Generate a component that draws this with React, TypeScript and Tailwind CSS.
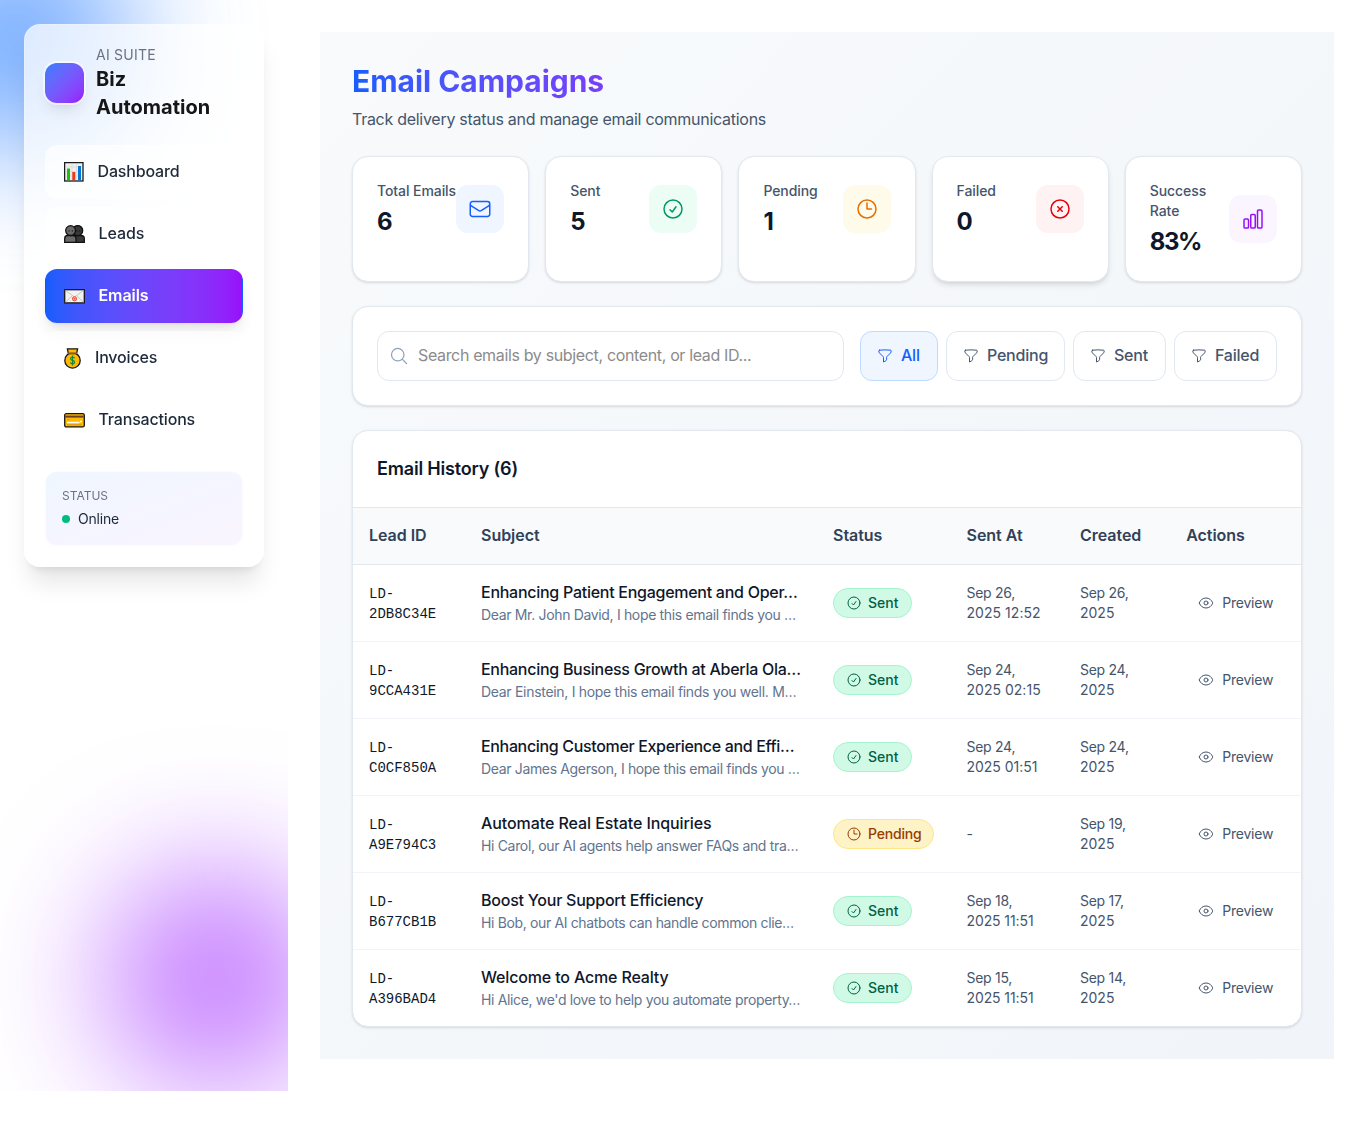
import type { ComponentType, ReactNode } from "react";
import {
  HiOutlineChartBar,
  HiOutlineCheckCircle,
  HiOutlineClock,
  HiOutlineEnvelope,
  HiOutlineEye,
  HiOutlineMagnifyingGlass,
  HiOutlineXCircle,
} from "react-icons/hi2";

type Icon = ComponentType<{ className?: string }>;

function ChartGlyph() {
  return (
    <svg width="20" height="20" viewBox="0 0 20 20">
      <rect x="0.6" y="0.6" width="18.4" height="18.4" fill="#f0f0f0" stroke="#1b1b1b" strokeWidth="1.3" />
      <path d="M1.5 5h16M1.5 9.5h16M1.5 14h16M8 1.5v16M12.5 1.5v16" stroke="#d9d9d9" strokeWidth="0.7" />
      <rect x="3" y="6.5" width="3" height="11.8" fill="#16c60c" />
      <rect x="8.3" y="10" width="3" height="8.3" fill="#f03a17" />
      <rect x="14" y="4" width="3" height="14.3" fill="#0078d7" />
    </svg>
  );
}

function PeopleGlyph() {
  return (
    <svg width="21" height="18" viewBox="0 0 21 18">
      <path d="M9 17.3v-3.8q0-3 3-3h5q3.3 0 3.3 3v3.8z" fill="#383838" stroke="#111" strokeWidth="1.3" />
      <circle cx="13.7" cy="5.6" r="5" fill="#383838" stroke="#111" strokeWidth="1.3" />
      <path d="M0.7 17.3v-3.8q0-3 3-3h5q3.3 0 3.3 3v3.8z" fill="#6a6a6a" stroke="#111" strokeWidth="1.3" />
      <circle cx="6.6" cy="5.6" r="4.9" fill="#6a6a6a" stroke="#111" strokeWidth="1.3" />
      <path d="M5 5.2v1.4M8.3 5.2v1.4M12.8 5.2v1.4M15.8 5.2v1.4" stroke="#111" strokeWidth="0.9" />
    </svg>
  );
}

function MailGlyph() {
  return (
    <svg width="21" height="15" viewBox="0 0 21 15">
      <rect x="0.7" y="0.7" width="19.6" height="13.2" fill="#f2f2f2" stroke="#171717" strokeWidth="1.3" />
      <path d="M1.5 1.5 10.5 8l9-6.5M1.5 13.2 8 7M19.5 13.2 13 7" fill="none" stroke="#bdbdbd" strokeWidth="0.8" />
      <circle cx="10.5" cy="9.8" r="2.1" fill="#f7b5a8" stroke="#f03a17" strokeWidth="0.9" />
      <circle cx="10.5" cy="9.8" r="0.8" fill="#f03a17" />
    </svg>
  );
}

function MoneyGlyph() {
  return (
    <svg width="17" height="21" viewBox="0 0 17 21">
      <circle cx="8.5" cy="12.4" r="7.7" fill="#ffb900" stroke="#171717" strokeWidth="1.3" />
      <path d="M3.4 0.8h10.2l-1 4.8h-8.2z" fill="#ffb900" stroke="#171717" strokeWidth="1.3" />
      <path d="M4 5.2h9" stroke="#8e562e" strokeWidth="1.6" />
      <path
        d="M10.6 10.2q-.6-1.1-2.1-1.1-1.9 0-1.9 1.6 0 1.3 1.9 1.7 2 .4 2 1.8 0 1.6-2 1.6-1.7 0-2.2-1.2M8.5 7.5v10"
        fill="none"
        stroke="#10893e"
        strokeWidth="1.2"
      />
    </svg>
  );
}

function CardGlyph() {
  return (
    <svg width="21" height="15" viewBox="0 0 21 15">
      <rect x="0.7" y="0.7" width="19.6" height="13.2" rx="1.5" fill="#ffb900" stroke="#171717" strokeWidth="1.3" />
      <rect x="1.3" y="2.6" width="18.4" height="2" fill="#6b3f22" />
      <path d="M3 6.8h2.5M3 11.8h14.5" stroke="#d88a00" strokeWidth="0.8" />
      <path d="M3 9.4h12.5M16 8.6h2" stroke="#fff" strokeWidth="1.5" />
    </svg>
  );
}

function FunnelIcon() {
  return (
    <svg
      className="size-4 shrink-0"
      viewBox="0 0 16 16"
      fill="none"
      stroke="currentColor"
      strokeWidth="1"
      strokeLinecap="round"
      strokeLinejoin="round"
    >
      <path d="M2.4 2.2Q8 1.500 13.600 2.200Q14.200 2.300 14.200 3Q14.200 4.300 13.500 5L10 8.500Q9.600 8.900 9.600 9.500V11.400Q9.600 12.300 8.800 12.700L6.500 14V9.500Q6.500 8.900 6 8.500L2.500 5Q1.800 4.300 1.800 3Q1.800 2.300 2.400 2.200Z" />
    </svg>
  );
}

const navItems = [
  { label: "Dashboard", glyph: <ChartGlyph />, box: "w-[21.5px]", text: "font-[450] tracking-[-0.17px]" },
  { label: "Leads", glyph: <PeopleGlyph />, box: "w-[22.5px]", text: "font-[450] tracking-[-0.1px]" },
  { label: "Emails", glyph: <MailGlyph />, box: "w-[22.5px]", text: "font-semibold tracking-[-0.08px]", active: true },
  { label: "Invoices", glyph: <MoneyGlyph />, box: "w-[19px]", text: "font-[450] tracking-[-0.18px]" },
  { label: "Transactions", glyph: <CardGlyph />, box: "w-[22.5px]", text: "font-[450] tracking-[-0.18px]" },
];

function Sidebar() {
  return (
    <aside className="relative h-[1091px] w-72 shrink-0 overflow-hidden p-6">
      <div className="absolute -left-24 -top-[72px] size-56 rounded-full bg-[#2b7fff]/68 blur-[64px]" />
      <div className="absolute -right-10 bottom-0 size-56 rounded-full bg-[#ad46ff]/69 blur-[64px]" />
      <div className="relative h-[543px] rounded-2xl border border-white/20 bg-white/72 p-5 shadow-xl backdrop-blur-xl">
        <div className="flex items-center gap-3">
          <div className="h-10 w-[39px] shrink-0 rounded-xl bg-linear-to-br from-[#2b7fff] to-[#9810fa] shadow-lg ring-2 ring-white/60" />
          <div>
            <p className="text-sm tracking-[0.25px] text-[#6a7282]">AI SUITE</p>
            <h1 className="text-xl leading-7 font-bold text-[#171717]">
              Biz
              <br />
              Automation
            </h1>
          </div>
        </div>
        <nav className="mt-6 flex flex-col gap-2">
          {navItems.map((item) => (
            <a
              key={item.label}
              className={
                item.active
                  ? "flex h-[54px] items-center rounded-xl border border-transparent bg-linear-to-r from-[#155dfc] to-[#9810fa] pl-[18px] text-white shadow-lg"
                  : "flex h-[54px] items-center rounded-xl border border-white/20 bg-white/60 pl-[18px] text-[#1e2939]"
              }
            >
              <span className={item.box + " shrink-0"}>{item.glyph}</span>
              <span className={item.text + " ml-3 pb-0.5"}>{item.label}</span>
            </a>
          ))}
        </nav>
        <div className="mt-6 h-[75px] rounded-xl border border-white/60 bg-linear-to-br from-[#eff6ff] to-[#faf5ff] p-4">
          <p className="text-xs text-[#6a7282]">STATUS</p>
          <div className="mt-[5px] flex items-center gap-2">
            <span className="h-2 w-2 rounded-full bg-[#00bc7d]" />
            <span className="text-sm tracking-[-0.2px] text-[#1e2939]">Online</span>
          </div>
        </div>
      </div>
    </aside>
  );
}

const stats: { label: string; value: string; icon: Icon; tone: string; shadow: string; num: string }[] = [
  { label: "Total Emails", value: "6", icon: HiOutlineEnvelope, tone: "bg-[#eff6ff] text-[#155dfc]", shadow: "shadow-sm", num: "" },
  { label: "Sent", value: "5", icon: HiOutlineCheckCircle, tone: "bg-[#ecfdf5] text-[#009966]", shadow: "shadow-sm", num: "" },
  { label: "Pending", value: "1", icon: HiOutlineClock, tone: "bg-[#fffbeb] text-[#e17100]", shadow: "shadow-sm", num: "" },
  { label: "Failed", value: "0", icon: HiOutlineXCircle, tone: "bg-[#fef2f2] text-[#e7000b]", shadow: "shadow-md", num: "" },
  { label: "Success Rate", value: "83%", icon: HiOutlineChartBar, tone: "bg-[#faf5ff] text-[#9810fa]", shadow: "shadow-sm", num: "tracking-[-1.4px]" },
];

function StatCards() {
  return (
    <div className="grid grid-cols-5 gap-4">
      {stats.map(({ label, value, icon: StatIcon, tone, shadow, num }) => (
        <div key={label} className={"h-[126px] rounded-2xl border border-[#e2e8f0] bg-white p-6 " + shadow}>
          <div className="flex items-center justify-between">
            <div>
              <p className="text-sm font-[450] tracking-[-0.08px] text-[#45556c]">{label}</p>
              <p className={"mt-[5px] -mb-px text-2xl leading-8 font-bold text-[#0f172b] " + num}>{value}</p>
            </div>
            <div className={"flex size-12 shrink-0 items-center justify-center rounded-xl " + tone}>
              <StatIcon className="size-6" />
            </div>
          </div>
        </div>
      ))}
    </div>
  );
}

const filters = [
  { label: "All", style: "w-[78px] border-[#bedbff] bg-[#eff6ff] text-[#155dfc]" },
  { label: "Pending", style: "w-[119px] border-[#e2e8f0] bg-white text-[#45556c]" },
  { label: "Sent", style: "w-[93px] border-[#e2e8f0] bg-white text-[#45556c]" },
  { label: "Failed", style: "w-[103px] border-[#e2e8f0] bg-white text-[#45556c]" },
];

function FilterBar() {
  return (
    <div className="mt-6 flex gap-4 rounded-2xl border border-[#e2e8f0] bg-white p-6 shadow-sm">
      <div className="relative flex-1">
        <HiOutlineMagnifyingGlass className="absolute left-3 top-[15px] size-5 text-[#90a1b9]" />
        <input
          placeholder="Search emails by subject, content, or lead ID..."
          className="h-[50px] w-full rounded-xl border border-[#e2e8f0] pb-0.5 pl-10 tracking-[-0.35px] placeholder:text-[#8b8b8b]"
        />
      </div>
      <div className="flex gap-2">
        {filters.map((f) => (
          <button key={f.label} className={"flex h-[50px] items-center gap-2 rounded-xl border pl-4 font-medium tracking-[-0.22px] " + f.style}>
            <FunnelIcon />
            <span className="pb-0.5">{f.label}</span>
          </button>
        ))}
      </div>
    </div>
  );
}

interface Email {
  id: string;
  subject: string;
  subjectTracking: string;
  body: string;
  bodyTracking: string;
  sent: boolean;
  sentAt: [string, string] | null;
  timeTracking: string;
  created: string;
}

const emails: Email[] = [
  {
    id: "2DB8C34E",
    subject: "Enhancing Patient Engagement and Oper…",
    subjectTracking: "tracking-[-0.27px]",
    body: "Dear Mr. John David, I hope this email finds you …",
    bodyTracking: "tracking-[-0.335px]",
    sent: true,
    sentAt: ["Sep 26,", "2025 12:52"],
    timeTracking: "tracking-[0.05px]",
    created: "Sep 26,",
  },
  {
    id: "9CCA431E",
    subject: "Enhancing Business Growth at Aberla Ola…",
    subjectTracking: "tracking-[-0.28px]",
    body: "Dear Einstein, I hope this email finds you well. M…",
    bodyTracking: "tracking-[-0.3px]",
    sent: true,
    sentAt: ["Sep 24,", "2025 02:15"],
    timeTracking: "tracking-[0.02px]",
    created: "Sep 24,",
  },
  {
    id: "C0CF850A",
    subject: "Enhancing Customer Experience and Effi…",
    subjectTracking: "tracking-[-0.34px]",
    body: "Dear James Agerson, I hope this email finds you …",
    bodyTracking: "tracking-[-0.345px]",
    sent: true,
    sentAt: ["Sep 24,", "2025 01:51"],
    timeTracking: "tracking-[-0.02px]",
    created: "Sep 24,",
  },
  {
    id: "A9E794C3",
    subject: "Automate Real Estate Inquiries",
    subjectTracking: "tracking-[-0.08px]",
    body: "Hi Carol, our AI agents help answer FAQs and tra…",
    bodyTracking: "tracking-[-0.335px]",
    sent: false,
    sentAt: null,
    timeTracking: "",
    created: "Sep 19,",
  },
  {
    id: "B677CB1B",
    subject: "Boost Your Support Efficiency",
    subjectTracking: "tracking-[-0.23px]",
    body: "Hi Bob, our AI chatbots can handle common clie…",
    bodyTracking: "tracking-[-0.36px]",
    sent: true,
    sentAt: ["Sep 18,", "2025 11:51"],
    timeTracking: "tracking-[-0.1px]",
    created: "Sep 17,",
  },
  {
    id: "A396BAD4",
    subject: "Welcome to Acme Realty",
    subjectTracking: "tracking-[-0.16px]",
    body: "Hi Alice, we'd love to help you automate property…",
    bodyTracking: "tracking-[-0.345px]",
    sent: true,
    sentAt: ["Sep 15,", "2025 11:51"],
    timeTracking: "tracking-[-0.1px]",
    created: "Sep 14,",
  },
];

function StatusBadge({ sent }: { sent: boolean }) {
  return sent ? (
    <span className="flex h-[30px] w-[79px] items-center gap-1.5 rounded-full border border-[#a4f4cf] bg-[#d0fae5] pl-3 text-sm font-medium text-[#006045]">
      <HiOutlineCheckCircle className="size-4" />
      Sent
    </span>
  ) : (
    <span className="flex h-[30px] w-[101px] items-center gap-1.5 rounded-full border border-[#fee685] bg-[#fef3c6] pl-3 text-sm font-medium tracking-[-0.2px] text-[#973c00]">
      <HiOutlineClock className="size-4" />
      Pending
    </span>
  );
}

function Row({ children, className }: { children: ReactNode; className: string }) {
  return (
    <div role="row" className={"grid grid-cols-[112px_352px_133.5px_113.5px_106.2px_1fr] items-center *:pl-4 " + className}>
      {children}
    </div>
  );
}

function EmailTable() {
  return (
    <div className="mt-6 overflow-hidden rounded-2xl border border-[#e2e8f0] bg-white shadow-sm">
      <h3 className="p-6 text-lg leading-7 font-semibold tracking-[-0.18px] text-[#0f172b]">Email History (6)</h3>
      <div role="table">
        <Row className="h-[58px] border-y border-[#e2e8f0] bg-[#f8fafc] pb-0.5 font-semibold tracking-[-0.03px] text-[#314158]">
          <div>Lead ID</div>
          <div>Subject</div>
          <div>Status</div>
          <div>Sent At</div>
          <div>Created</div>
          <div>Actions</div>
        </Row>
        {emails.map((e) => (
          <Row key={e.id} className="h-[77px] border-b border-[#f1f5f9] text-sm text-[#45556c] last:h-[76px] last:border-b-0">
            <div className="pt-0.5 font-['Liberation_Mono',monospace] text-[#0f172b]">
              LD-
              <br />
              {e.id}
            </div>
            <div className="whitespace-nowrap">
              <p className={"-mt-px mb-px text-base font-medium text-[#0f172b] " + e.subjectTracking}>{e.subject}</p>
              <p className={"text-[#62748e] " + e.bodyTracking}>{e.body}</p>
            </div>
            <div>
              <StatusBadge sent={e.sent} />
            </div>
            <div>
              {e.sentAt ? (
                <>
                  <span className="tracking-[-0.27px]">{e.sentAt[0]}</span>
                  <br />
                  <span className={e.timeTracking}>{e.sentAt[1]}</span>
                </>
              ) : (
                "-"
              )}
            </div>
            <div>
              <span className="tracking-[-0.27px]">{e.created}</span>
              <br />
              2025
            </div>
            <div>
              <button className="flex items-center gap-2 pl-3 tracking-[-0.22px]">
                <HiOutlineEye className="size-4" />
                Preview
              </button>
            </div>
          </Row>
        ))}
      </div>
    </div>
  );
}

export default function App() {
  return (
    <div className="flex min-h-[1123px] bg-white font-['Inter',sans-serif] text-base">
      <Sidebar />
      <main className="m-8 h-[1027px] min-w-0 flex-1 bg-linear-to-br from-[#f8fafc] to-[#f1f5f9] px-8 pt-[31px] pb-8">
        <header className="mb-[25px] w-[414px]">
          <h2 className="bg-linear-to-r from-[#155dfc] to-[#9810fa] bg-clip-text text-3xl leading-9 font-bold tracking-[-0.03px] text-transparent">
            Email Campaigns
          </h2>
          <p className="mt-2 tracking-[-0.278px] whitespace-nowrap text-[#45556c]">
            Track delivery status and manage email communications
          </p>
        </header>
        <StatCards />
        <FilterBar />
        <EmailTable />
      </main>
    </div>
  );
}
